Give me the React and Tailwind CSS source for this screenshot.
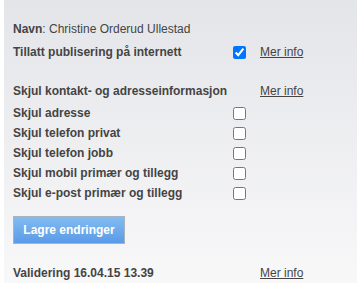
export default function App() {
  const rows = [
    "Skjul adresse",
    "Skjul telefon privat",
    "Skjul telefon jobb",
    "Skjul mobil primær og tillegg",
    "Skjul e-post primær og tillegg",
  ];
  const Box = ({ checked }) => (
    <input
      type="checkbox"
      defaultChecked={checked}
      className="m-0 w-[13px] h-[13px] accent-[#0075ff]"
    />
  );
  return (
    <div className="w-[357px] h-[296px] bg-white" style={{ fontFamily: '"Liberation Sans", Arial, sans-serif' }}>
      <div className="ml-[4px] h-[283px] bg-gradient-to-b from-[#e4e5e9] to-[#f8f8f9] pl-[9px] pt-[21px] text-[12px] text-[#444]">
        <div className="h-[16px] leading-[16px]">
          <span className="font-bold">Navn</span>: Christine Orderud Ullestad
        </div>
        <div className="mt-[7px] flex h-[16px] items-center">
          <div className="w-[220px] font-bold">Tillatt publisering på internett</div>
          <div className="w-[27px] flex items-center"><Box checked /></div>
          <a className="underline">Mer info</a>
        </div>
        <div className="mt-[23px] flex h-[16px] items-center">
          <div className="w-[247px] font-bold">Skjul kontakt- og adresseinformasjon</div>
          <a className="underline">Mer info</a>
        </div>
        <div className="mt-[4px] flex flex-col">
          {rows.map((r) => (
            <div key={r} className="flex h-[20px] items-center">
              <div className="w-[220px] font-bold">{r}</div>
              <div className="w-[27px] flex items-center"><Box /></div>
            </div>
          ))}
        </div>
        <button className="mt-[13px] h-[28px] w-[112px] border border-[#a9b3c0] bg-gradient-to-b from-[#82bcf2] to-[#5b9ae6] text-[12px] font-bold text-white">
          Lagre endringer
        </button>
        <div className="mt-[21px] flex h-[16px] items-center">
          <div className="w-[247px] font-bold">Validering 16.04.15 13.39</div>
          <a className="underline">Mer info</a>
        </div>
      </div>
    </div>
  );
}
